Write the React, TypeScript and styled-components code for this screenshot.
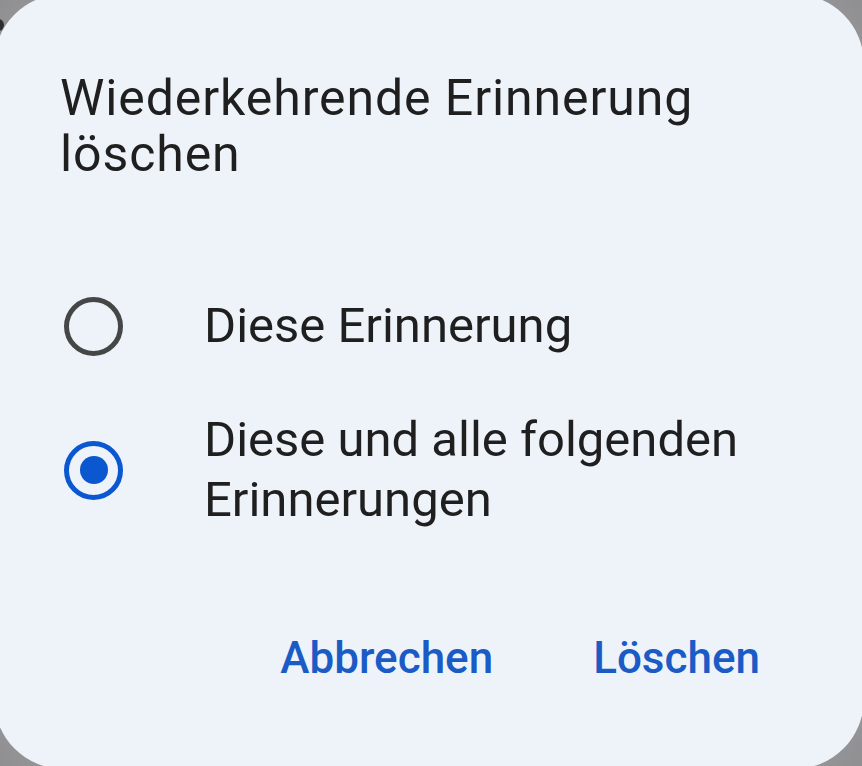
import React from 'react';
import styled, {createGlobalStyle} from "styled-components";

const GlobalStyle = createGlobalStyle`
    html, body {
        margin: 0;
        padding: 0;
        background: #9d9d9f;
    }
    * {
        box-sizing: border-box;
    }
`

type Option = {
    label: string
    checked: boolean
}

const options: Option[] = [
    {label: 'Diese Erinnerung', checked: false},
    {label: 'Diese und alle folgenden Erinnerungen', checked: true},
]

export default function App() {
    return (
        <>
            <GlobalStyle/>
            <Backdrop>
                <EdgeDot/>
                <Dialog>
                    <Title>Wiederkehrende Erinnerung löschen</Title>
                    <OptionList>
                        {options.map(o => (
                            <OptionRow key={o.label}>
                                <Radio checked={o.checked}/>
                                <OptionLabel>{o.label}</OptionLabel>
                            </OptionRow>
                        ))}
                    </OptionList>
                    <Actions>
                        <TextButton>Abbrechen</TextButton>
                        <TextButton>Löschen</TextButton>
                    </Actions>
                </Dialog>
            </Backdrop>
        </>
    );
}

const Backdrop = styled.div`
    position: relative;
    width: 862px;
    height: 766px;
    overflow: hidden;
    background: radial-gradient(circle at center, #8e8e90 0%, #a3a3a5 80%, #8f8f91 100%);
`

// dark sliver of something peeking in at the top-left edge
const EdgeDot = styled.span`
    position: absolute;
    left: -7px;
    top: 19px;
    width: 11px;
    height: 12px;
    border-radius: 50%;
    background: #2e2e2e;
`

const Dialog = styled.div`
    position: relative;
    width: 870px;
    height: 775px;
    margin: -6px 0 0 -6px;
    border-radius: 70px;
    background-color: #eef3fa;
    padding: 76px 0 0 66px;
    font-family: Roboto, "Noto Sans", sans-serif;
    color: #1f1f1f;
`

const Title = styled.h2`
    margin: 0;
    font-size: 50px;
    font-weight: 400;
    line-height: 56px;
    letter-spacing: 0.9px;
    max-width: 720px;
`

const OptionList = styled.div`
    margin-top: 114px;
    display: flex;
    flex-direction: column;
    gap: 54px;
`

const OptionRow = styled.label`
    display: flex;
    align-items: center;
    gap: 81px;
`

const Radio = styled.span<{checked: boolean}>`
    flex: none;
    width: 59px;
    height: 59px;
    margin-left: 4px;
    border-radius: 50%;
    border: 5px solid ${p => p.checked ? '#0b57d0' : '#444746'};
    display: flex;
    align-items: center;
    justify-content: center;

    &::after {
        content: '';
        width: 28px;
        height: 28px;
        border-radius: 50%;
        background: ${p => p.checked ? '#0b57d0' : 'transparent'};
    }
`

const OptionLabel = styled.span`
    font-size: 49px;
    line-height: 60px;
    max-width: 580px;
`

const Actions = styled.div`
    margin-top: 100px;
    display: flex;
    justify-content: flex-end;
    gap: 100px;
    padding-right: 104px;
`

const TextButton = styled.button`
    border: none;
    background: none;
    padding: 0;
    font-family: inherit;
    font-size: 44px;
    font-weight: 500;
    color: #1a5bc6;
    line-height: 56px;
    cursor: pointer;
`
